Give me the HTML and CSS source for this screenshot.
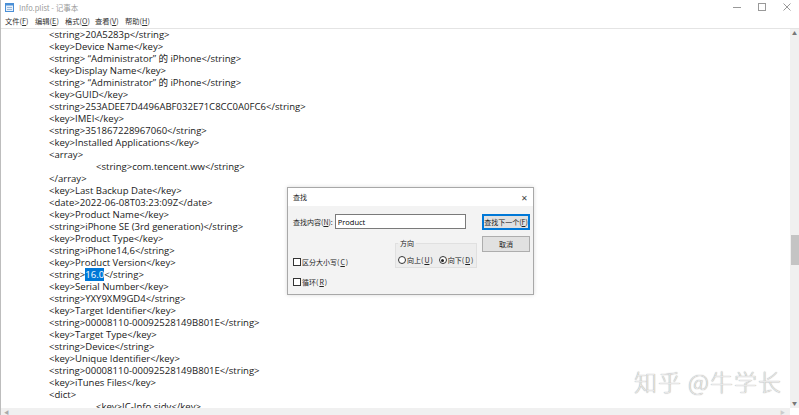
FILE: index.html
```html
<!DOCTYPE html>
<html lang="zh-CN">
<head>
    <meta charset="UTF-8">
    <title>Info.plist - 记事本</title>
    <link rel="stylesheet" href="styles.css">
</head>
<body>
<div class="window">
    <div class="titlebar">
        <svg class="app-icon" width="9" height="9" viewBox="0 0 9 9">
            <rect x="0.5" y="0.5" width="8" height="8" fill="#e8f1fb" stroke="#4a8fd6"/>
            <rect x="0.5" y="0.5" width="8" height="2" fill="#4a8fd6"/>
            <line x1="2" y1="4.5" x2="7" y2="4.5" stroke="#9bb8d8"/>
            <line x1="2" y1="6.5" x2="7" y2="6.5" stroke="#9bb8d8"/>
        </svg>
        <span class="title">Info.plist - 记事本</span>
        <div class="controls">
            <span class="ctl">
                <svg width="8" height="8" viewBox="0 0 8 8"><line x1="0" y1="4.5" x2="8" y2="4.5" stroke="#999"/></svg>
            </span>
            <span class="ctl">
                <svg width="8" height="8" viewBox="0 0 8 8"><rect x="0.5" y="0.5" width="7" height="7" fill="none" stroke="#999"/></svg>
            </span>
            <span class="ctl">
                <svg width="8" height="8" viewBox="0 0 8 8"><path d="M0.5 0.5L7.5 7.5M7.5 0.5L0.5 7.5" stroke="#999"/></svg>
            </span>
        </div>
    </div>

    <div class="menubar">
        <span>文件(<u>F</u>)</span>
        <span>编辑(<u>E</u>)</span>
        <span>格式(<u>O</u>)</span>
        <span>查看(<u>V</u>)</span>
        <span>帮助(<u>H</u>)</span>
    </div>

    <div class="editor">
        <div class="text-area">
<pre class="text">	&lt;string&gt;20A5283p&lt;/string&gt;
	&lt;key&gt;Device Name&lt;/key&gt;
	&lt;string&gt; “Administrator” 的 iPhone&lt;/string&gt;
	&lt;key&gt;Display Name&lt;/key&gt;
	&lt;string&gt; “Administrator” 的 iPhone&lt;/string&gt;
	&lt;key&gt;GUID&lt;/key&gt;
	&lt;string&gt;253ADEE7D4496ABF032E71C8CC0A0FC6&lt;/string&gt;
	&lt;key&gt;IMEI&lt;/key&gt;
	&lt;string&gt;351867228967060&lt;/string&gt;
	&lt;key&gt;Installed Applications&lt;/key&gt;
	&lt;array&gt;
		&lt;string&gt;com.tencent.ww&lt;/string&gt;
	&lt;/array&gt;
	&lt;key&gt;Last Backup Date&lt;/key&gt;
	&lt;date&gt;2022-06-08T03:23:09Z&lt;/date&gt;
	&lt;key&gt;Product Name&lt;/key&gt;
	&lt;string&gt;iPhone SE (3rd generation)&lt;/string&gt;
	&lt;key&gt;Product Type&lt;/key&gt;
	&lt;string&gt;iPhone14,6&lt;/string&gt;
	&lt;key&gt;Product Version&lt;/key&gt;
	&lt;string&gt;<span class="sel">16.0</span>&lt;/string&gt;
	&lt;key&gt;Serial Number&lt;/key&gt;
	&lt;string&gt;YXY9XM9GD4&lt;/string&gt;
	&lt;key&gt;Target Identifier&lt;/key&gt;
	&lt;string&gt;00008110-00092528149B801E&lt;/string&gt;
	&lt;key&gt;Target Type&lt;/key&gt;
	&lt;string&gt;Device&lt;/string&gt;
	&lt;key&gt;Unique Identifier&lt;/key&gt;
	&lt;string&gt;00008110-00092528149B801E&lt;/string&gt;
	&lt;key&gt;iTunes Files&lt;/key&gt;
	&lt;dict&gt;
		&lt;key&gt;IC-Info.sidv&lt;/key&gt;</pre>
        </div>
        <div class="vscroll">
            <span class="arrow">&#9650;</span>
            <div class="track"><div class="thumb"></div></div>
            <span class="arrow">&#9660;</span>
        </div>
    </div>

    <div class="hscroll">
        <span class="arrow">&#9664;</span>
        <span class="arrow right">&#9654;</span>
    </div>

    <div class="watermark">知乎 @牛学长</div>

    <div class="dialog">
        <div class="dialog-title">
            <span>查找</span>
            <span class="close">✕</span>
        </div>
        <div class="dialog-body">
            <div class="dialog-main">
                <div class="find-row">
                    <label for="find">查找内容(<u>N</u>):</label>
                    <input type="text" id="find" value="Product">
                </div>
                <div class="options">
                    <div class="checks">
                        <label class="check"><span class="box"></span>区分大小写(<u>C</u>)</label>
                        <label class="check"><span class="box"></span>循环(<u>R</u>)</label>
                    </div>
                    <fieldset class="direction">
                        <legend>方向</legend>
                        <label class="radio"><span class="dot"></span>向上(<u>U</u>)</label>
                        <label class="radio"><span class="dot on"></span>向下(<u>D</u>)</label>
                    </fieldset>
                </div>
            </div>
            <div class="dialog-buttons">
                <button class="btn default">查找下一个(<u>F</u>)</button>
                <button class="btn">取消</button>
            </div>
        </div>
    </div>
</div>
</body>
</html>
```

FILE: styles.css
```css
body {
    margin: 0;
    background-color: #fff;
    font-family: "Open Sans", "Noto Sans CJK SC", sans-serif;
    overflow: hidden;
}

.window {
    position: relative;
    width: 799px;
    height: 415px;
    display: flex;
    flex-direction: column;
    border-left: 1px solid #bdbdbd;
    box-sizing: border-box;
}

.titlebar {
    height: 14px;
    display: flex;
    align-items: center;
    padding-left: 4px;
    font-family: "Noto Sans CJK SC", sans-serif;
    font-size: 7.5px;
    color: #9a9a9a;
}

.app-icon {
    margin-right: 5px;
}

.controls {
    margin-left: auto;
    display: flex;
}

.ctl {
    width: 25px;
    height: 14px;
    display: flex;
    align-items: center;
    justify-content: center;
}

.menubar {
    height: 14px;
    display: flex;
    align-items: center;
    gap: 5px;
    padding-left: 4px;
    font-family: "Noto Sans CJK SC", sans-serif;
    font-size: 7.3px;
    color: #333;
    border-bottom: 1px solid #e4e4e4;
}

.menubar span {
    width: 25px;
}

.menubar u {
    text-decoration: underline;
}

.editor {
    flex: 1;
    display: flex;
    min-height: 0;
}

.text-area {
    flex: 1;
    overflow: hidden;
}

.text {
    margin: 0;
    padding-left: 1px;
    font-family: "Open Sans", "Noto Sans CJK SC", sans-serif;
    font-size: 9.55px;
    line-height: 12px;
    color: #1a1a1a;
    tab-size: 47px;
    white-space: pre;
}

.sel {
    background-color: #0078d7;
    color: #fff;
}

.vscroll {
    width: 9px;
    background-color: #f0f0f0;
    display: flex;
    flex-direction: column;
    align-items: center;
}

.vscroll .arrow {
    font-size: 5px;
    color: #777;
    height: 9px;
    line-height: 9px;
}

.track {
    flex: 1;
    width: 100%;
    padding-top: 197px;
}

.thumb {
    width: 8px;
    margin: 0 auto;
    height: 30px;
    background-color: #c4c4c4;
}

.hscroll {
    height: 7px;
    background-color: #f0f0f0;
    display: flex;
    align-items: center;
    padding: 0 5px 0 3px;
    margin-right: 9px;
}

.hscroll .arrow {
    font-size: 5px;
    color: #aaa;
}

.hscroll .right {
    margin-left: auto;
    color: #ccc;
}

.watermark {
    position: absolute;
    left: 633px;
    top: 364px;
    font-family: "Noto Sans CJK SC", sans-serif;
    font-weight: 300;
    font-size: 23px;
    letter-spacing: 1px;
    color: #e8e8e8;
    text-shadow: 0 0 1px #8a8a8a;
}

/* 查找对话框 */
.dialog {
    position: absolute;
    left: 286px;
    top: 187px;
    width: 245px;
    height: 106px;
    background-color: #f3f3f3;
    border: 1px solid #a8a8a8;
    box-shadow: 0 0 4px rgba(0, 0, 0, 0.15);
    display: flex;
    flex-direction: column;
    font-family: "Noto Sans CJK SC", sans-serif;
    font-size: 7px;
    color: #222;
}

.dialog u {
    text-decoration: underline;
}

.dialog-title {
    height: 18px;
    background-color: #fff;
    display: flex;
    align-items: center;
    justify-content: space-between;
    padding: 0 5px 0 5px;
}

.close {
    font-size: 8px;
    color: #444;
}

.dialog-body {
    flex: 1;
    display: flex;
    padding: 8px 3px 0 5px;
    gap: 4px;
}

.dialog-main {
    flex: 1;
    min-width: 0;
    display: flex;
    flex-direction: column;
}

.find-row {
    display: flex;
    align-items: center;
    gap: 2px;
    padding-right: 12px;
}

.find-row input {
    flex: 1;
    min-width: 0;
    height: 15px;
    box-sizing: border-box;
    border: 1px solid #7a7a7a;
    background-color: #fff;
    font-family: "Open Sans", sans-serif;
    font-size: 7.5px;
    padding: 0 2px;
    margin: 0;
}

.options {
    display: flex;
    margin-top: 1px;
}

.checks {
    width: 102px;
    flex-shrink: 0;
    display: flex;
    flex-direction: column;
    gap: 10px;
    padding-top: 27px;
}

.check {
    display: flex;
    align-items: center;
    gap: 1px;
}

.box {
    width: 6px;
    height: 6px;
    border: 1px solid #333;
    background-color: #fff;
}

.direction {
    margin: 8px 0 0 0;
    width: 82px;
    flex-shrink: 0;
    box-sizing: border-box;
    padding: 7px 2px 0 2px;
    border: 1px solid #e0e0e0;
    background-color: #ededed;
    display: flex;
    gap: 6px;
    height: 30px;
}

.direction legend {
    padding: 0 2px;
}

.radio {
    display: flex;
    align-items: center;
    gap: 1px;
    height: 10px;
}

.dot {
    width: 6px;
    height: 6px;
    border: 1px solid #333;
    border-radius: 50%;
    background-color: #fff;
    position: relative;
}

.dot.on::after {
    content: '';
    position: absolute;
    left: 1.5px;
    top: 1.5px;
    width: 3px;
    height: 3px;
    border-radius: 50%;
    background-color: #222;
}

.dialog-buttons {
    display: flex;
    flex-direction: column;
    flex-shrink: 0;
    gap: 6px;
    width: 48px;
}

.btn {
    height: 16px;
    padding: 0;
    border: 1px solid #adadad;
    background-color: #e1e1e1;
    font-family: "Noto Sans CJK SC", sans-serif;
    font-size: 7px;
    color: #222;
    white-space: nowrap;
}

.btn.default {
    border: 2px solid #0078d7;
}
```
